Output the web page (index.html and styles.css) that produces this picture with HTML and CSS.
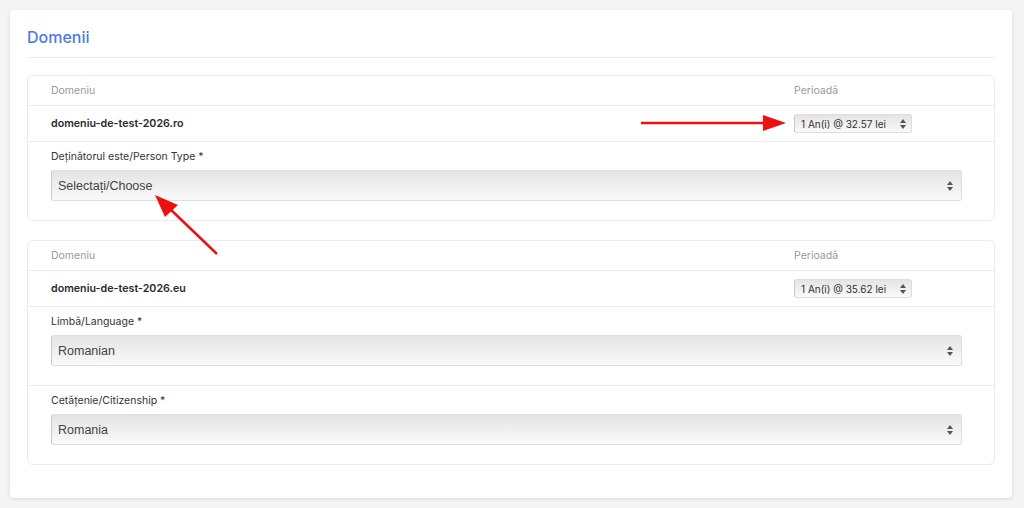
FILE: index.html
```html
<!DOCTYPE html>
<html lang="ro">
<head>
    <meta charset="UTF-8">
    <meta name="viewport" content="width=device-width, initial-scale=1">
    <title>Domenii</title>
    <link rel="stylesheet" href="styles.css">
</head>
<body>
    <div class="card">
        <h2 class="card-title">Domenii</h2>

        <div class="panel">
            <div class="row head">
                <div class="col-name">Domeniu</div>
                <div class="col-period">Perioadă</div>
            </div>
            <div class="row domain">
                <div class="col-name">domeniu-de-test-2026.ro</div>
                <div class="col-period">
                    <div class="select small"><span>1 An(i) @ 32.57 lei</span><svg width="6" height="10" viewBox="0 0 6 10"><path d="M3 0 L6 4 H0 Z M3 10 L6 6 H0 Z" fill="#555"/></svg></div>
                </div>
            </div>
            <div class="field">
                <label>Deținătorul este/Person Type *</label>
                <div class="select"><span>Selectați/Choose</span><svg width="6" height="10" viewBox="0 0 6 10"><path d="M3 0 L6 4 H0 Z M3 10 L6 6 H0 Z" fill="#555"/></svg></div>
            </div>
        </div>

        <div class="panel">
            <div class="row head">
                <div class="col-name">Domeniu</div>
                <div class="col-period">Perioadă</div>
            </div>
            <div class="row domain">
                <div class="col-name">domeniu-de-test-2026.eu</div>
                <div class="col-period">
                    <div class="select small"><span>1 An(i) @ 35.62 lei</span><svg width="6" height="10" viewBox="0 0 6 10"><path d="M3 0 L6 4 H0 Z M3 10 L6 6 H0 Z" fill="#555"/></svg></div>
                </div>
            </div>
            <div class="field">
                <label>Limbă/Language *</label>
                <div class="select"><span>Romanian</span><svg width="6" height="10" viewBox="0 0 6 10"><path d="M3 0 L6 4 H0 Z M3 10 L6 6 H0 Z" fill="#555"/></svg></div>
            </div>
            <div class="field">
                <label>Cetățenie/Citizenship *</label>
                <div class="select"><span>Romania</span><svg width="6" height="10" viewBox="0 0 6 10"><path d="M3 0 L6 4 H0 Z M3 10 L6 6 H0 Z" fill="#555"/></svg></div>
            </div>
        </div>
    </div>

    <!-- annotation arrows -->
    <svg class="arrows" width="1024" height="508" viewBox="0 0 1024 508">
        <line x1="641" y1="123" x2="766" y2="123" stroke="#ee1010" stroke-width="2.5"/>
        <path d="M786 123 L763 115 L763 131 Z" fill="#ee1010"/>
        <line x1="217" y1="254" x2="168" y2="207" stroke="#ee1010" stroke-width="2.5"/>
        <path d="M155 195 L178 205 L165 217 Z" fill="#ee1010"/>
    </svg>
</body>
</html>
```

FILE: styles.css
```css
body {
    margin: 0;
    background-color: #f5f5f5;
    font-family: 'Inter', 'Noto Sans', sans-serif;
    color: #333;
}
.card {
    margin: 10px 12px 10px 10px;
    padding: 17px 17px 33px 17px;
    background-color: #fff;
    border-radius: 4px;
    box-shadow: 0 1px 4px rgba(0, 0, 0, 0.12);
}
.card-title {
    margin: 0 0 10px 0;
    padding-bottom: 10px;
    font-size: 16px;
    line-height: 20px;
    font-weight: 500;
    color: #4a79e6;
    border-bottom: 1px solid #eeeeee;
}
.panel {
    margin-top: 17px;
    border: 1px solid #ececec;
    border-radius: 6px;
}
.panel + .panel {
    margin-top: 19px;
}
.row {
    display: flex;
    align-items: center;
    padding-left: 23px;
    border-bottom: 1px solid #ededed;
}
.row.head {
    height: 29px;
    font-size: 10.5px;
    color: #9a9a9a;
}
.row.domain {
    height: 35px;
    font-size: 10.7px;
    font-weight: 600;
    color: #2b2b2b;
}
.col-name {
    flex: 1;
}
.col-period {
    width: 200px;
}
.field {
    padding: 8px 32px 19px 23px;
}
.field + .field {
    border-top: 1px solid #ededed;
}
.field label {
    display: block;
    font-size: 10.5px;
    line-height: 14px;
    color: #333;
    margin-bottom: 6px;
}
.select {
    display: flex;
    align-items: center;
    justify-content: space-between;
    height: 31px;
    padding: 0 8px 0 6px;
    box-sizing: border-box;
    font-family: 'Liberation Sans', Arial, sans-serif;
    font-size: 12.5px;
    color: #444;
    background: linear-gradient(#e4e4e4, #f1f1f1 60%, #fafafa);
    border: 1px solid #dedede;
    border-left-color: #c9c9c9;
    border-radius: 3px;
}
.select.small {
    width: 118px;
    height: 19px;
    padding: 0 5px 0 6px;
    font-family: 'Inter', 'Noto Sans', sans-serif;
    font-size: 10px;
    font-weight: 400;
    color: #333;
}
.arrows {
    position: absolute;
    top: 0;
    left: 0;
    pointer-events: none;
}
```
